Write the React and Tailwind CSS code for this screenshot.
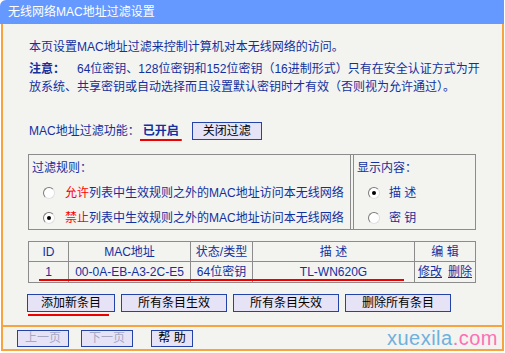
const font = { fontFamily: '"Liberation Sans", "Noto Sans CJK SC", sans-serif' };

function Radio({ checked }) {
    return (
        <span className="inline-flex w-[12px] h-[12px] rounded-full border border-t-[#7a7a7a] border-l-[#7a7a7a] border-r-[#e0e0e0] border-b-[#e0e0e0] bg-white items-center justify-center shrink-0">
            {checked && <span className="w-[4px] h-[4px] rounded-full bg-black" />}
        </span>
    );
}

function Btn({ children, className = '', disabled }) {
    return (
        <button
            className={`h-[18px] border border-[#2443a8] bg-[#e6e3f7] text-[12px] leading-none flex items-center justify-center ${disabled ? 'text-[#a8a8c4]' : 'text-black'} ${className}`}
        >
            {children}
        </button>
    );
}

export default function App() {
    return (
        <div className="w-[505px] h-[353px] bg-white overflow-hidden" style={font}>
            {/* Title bar */}
            <div className="w-[504px] h-[24px] bg-[#6699ff] rounded-tl-[6px] flex items-center pl-[8px] text-white text-[12px]">
                无线网络MAC地址过滤设置
            </div>

            {/* Body */}
            <div className="ml-[1px] w-[503px] h-[303px] border-l-2 border-r-2 border-b-2 border-[#f7a440] bg-[#f3f3f0] pl-[26px] pt-[14px] text-[#12309f] text-[12px]">
                <div className="leading-[18px] mb-[4px]">本页设置MAC地址过滤来控制计算机对本无线网络的访问。</div>
                <div className="leading-[18px]">
                    <div className="whitespace-nowrap">
                        <span className="font-bold">注意：</span>
                        <span className="ml-[12px]">64位密钥、128位密钥和152位密钥（16进制形式）只有在安全认证方式为开</span>
                    </div>
                    <div className="whitespace-nowrap">放系统、共享密钥或自动选择而且设置默认密钥时才有效（否则视为允许通过）。</div>
                </div>

                <div className="mt-[26px] flex items-center h-[18px]">
                    <span>MAC地址过滤功能：</span>
                    <span className="relative font-bold ml-[3px]">
                        已开启
                        <span className="absolute left-[-3px] right-[-3px] top-[17px] h-[2px] bg-[#ee0000] rounded-r-full" />
                    </span>
                    <Btn className="ml-[13px] w-[70px]">关闭过滤</Btn>
                </div>

                {/* Filter rules */}
                <div className="mt-[14px] ml-[-1px] w-[448px] h-[76px] border border-[#8c8c8c] flex">
                    <div className="w-[322px] border-r border-[#8c8c8c] pl-[3px] pt-[4px]">
                        <div className="leading-[18px]">过滤规则：</div>
                        <div className="flex items-center h-[18px] mt-[7px] pl-[11px]">
                            <Radio />
                            <span className="ml-[10px]"><span className="text-[#ff0000]">允许</span>列表中生效规则之外的MAC地址访问本无线网络</span>
                        </div>
                        <div className="flex items-center h-[18px] mt-[7px] pl-[11px]">
                            <Radio checked />
                            <span className="ml-[10px]"><span className="text-[#ff0000]">禁止</span>列表中生效规则之外的MAC地址访问本无线网络</span>
                        </div>
                    </div>
                    <div className="flex-1 ml-[2px] border-l border-[#8c8c8c] pl-[3px] pt-[4px]">
                        <div className="leading-[18px]">显示内容：</div>
                        <div className="flex items-center h-[18px] mt-[7px] pl-[11px]">
                            <Radio checked />
                            <span className="ml-[9px]">描 述</span>
                        </div>
                        <div className="flex items-center h-[18px] mt-[7px] pl-[11px]">
                            <Radio />
                            <span className="ml-[9px]">密 钥</span>
                        </div>
                    </div>
                </div>

                {/* Entries table */}
                <div className="relative mt-[11px] ml-[-1px] w-[448px] border border-[#8c8c8c]">
                    <div className="grid grid-cols-[40px_122px_62px_162px_1fr] h-[20px] border-b border-[#8c8c8c]">
                        <div className="flex items-center justify-center border-r border-[#8c8c8c]">ID</div>
                        <div className="flex items-center justify-center border-r border-[#8c8c8c]">MAC地址</div>
                        <div className="flex items-center justify-center border-r border-[#8c8c8c]">状态/类型</div>
                        <div className="flex items-center justify-center border-r border-[#8c8c8c]">描 述</div>
                        <div className="flex items-center justify-center">编 辑</div>
                    </div>
                    <div className="grid grid-cols-[40px_122px_62px_162px_1fr] h-[20px]">
                        <div className="flex items-center justify-center border-r border-[#8c8c8c]">1</div>
                        <div className="flex items-center justify-center border-r border-[#8c8c8c]">00-0A-EB-A3-2C-E5</div>
                        <div className="flex items-center justify-center border-r border-[#8c8c8c]">64位密钥</div>
                        <div className="flex items-center justify-center border-r border-[#8c8c8c]">TL-WN620G</div>
                        <div className="flex items-center justify-center gap-[6px]">
                            <a className="underline">修改</a>
                            <a className="underline">删除</a>
                        </div>
                    </div>
                    <span className="absolute left-[10px] w-[365px] top-[37px] h-[2px] bg-[#ee0000]" />
                </div>

                {/* Action buttons */}
                <div className="mt-[11px] ml-[-2px] flex gap-[6px]">
                    <div className="relative">
                        <Btn className="w-[88px]">添加新条目</Btn>
                        <span className="absolute left-[1px] w-[81px] top-[20px] h-[2px] bg-[#ee0000]" />
                    </div>
                    <Btn className="w-[106px]">所有条目生效</Btn>
                    <Btn className="w-[106px]">所有条目失效</Btn>
                    <Btn className="w-[106px]">删除所有条目</Btn>
                </div>
            </div>

            {/* Footer */}
            <div className="ml-[1px] w-[503px] h-[24px] border-l-2 border-r-2 border-b-2 border-[#f7a440] bg-[#f3f3f0] flex items-center pl-[14px]">
                <Btn className="w-[52px] !h-[17px]" disabled>上一页</Btn>
                <Btn className="w-[52px] !h-[17px] ml-[12px]" disabled>下一页</Btn>
                <Btn className="w-[42px] !h-[17px] ml-[18px]">帮 助</Btn>
                <div className="ml-auto mr-[4px] text-[20px] leading-none tracking-[0.5px]">
                    <span className="text-[#6fb0dc]">xuexila</span>
                    <span className="text-[#ff6fb4]">.com</span>
                </div>
            </div>
        </div>
    );
}
